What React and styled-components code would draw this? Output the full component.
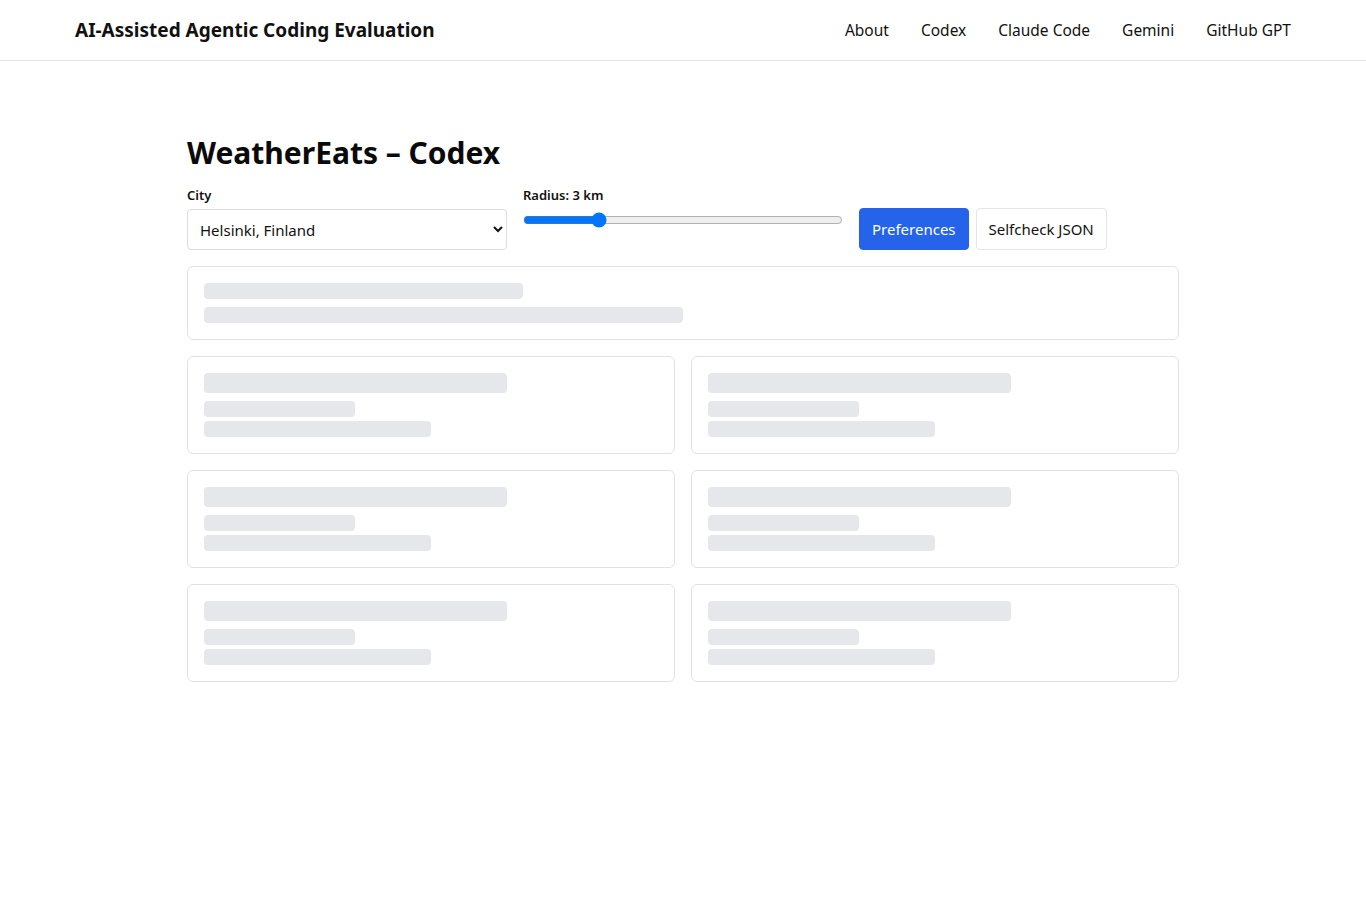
import React, { useState } from "react";
import styled, { createGlobalStyle } from "styled-components";

const GlobalStyle = createGlobalStyle`
  * { box-sizing: border-box; }
  body {
    margin: 0;
    background: #fff;
    color: #111;
    font-family: "Segoe UI", "Noto Sans", "Open Sans", sans-serif;
  }
`;

const Header = styled.header`
  height: 61px;
  border-bottom: 1px solid #e5e5e5;
  display: flex;
  align-items: center;
  justify-content: space-between;
  padding: 0 75px;
`;

const Brand = styled.div`
  font-size: 19px;
  font-weight: 700;
  color: #111;
`;

const Nav = styled.nav`
  display: flex;
  gap: 32px;
`;

const NavLink = styled.a`
  font-size: 15.5px;
  color: #111;
  text-decoration: none;
`;

const Main = styled.main`
  max-width: 992px;
  margin: 0 auto;
  padding: 74px 0 40px;
`;

const Title = styled.h1`
  font-size: 30px;
  font-weight: 700;
  margin: 0 0 15px;
  line-height: 1.2;
  color: #0a0a0a;
`;

const Controls = styled.div`
  display: flex;
  align-items: flex-end;
  gap: 16px;
  margin-bottom: 16px;
`;

const Field = styled.label`
  display: flex;
  flex-direction: column;
  gap: ${(p) => (p.top ? 8 : 5)}px;
  width: 320px;
  align-self: ${(p) => (p.top ? "flex-start" : "auto")};
`;

const FieldLabel = styled.span`
  font-size: 13px;
  font-weight: 600;
`;

const Select = styled.select`
  height: 41px;
  font-size: 15px;
  font-family: inherit;
  padding: 0 8px;
  border: 1px solid #ddd;
  border-radius: 4px;
  background: #fff;
  color: #111;
`;

const Range = styled.input`
  width: 320px;
  margin: 0;
`;

const Buttons = styled.div`
  display: flex;
  gap: 7px;
`;

const Button = styled.button`
  height: 42px;
  padding: 0 12px;
  font-size: 15px;
  font-family: inherit;
  border-radius: 4px;
  cursor: pointer;
  border: 1px solid ${(p) => (p.primary ? "#2563eb" : "#e5e5e5")};
  background: ${(p) => (p.primary ? "#2563eb" : "#fff")};
  color: ${(p) => (p.primary ? "#fff" : "#111")};
`;

const Card = styled.div`
  border: 1px solid #e2e2e2;
  border-radius: 6px;
  padding: 16px;
  display: flex;
  flex-direction: column;
`;

const Grid = styled.div`
  display: grid;
  grid-template-columns: 1fr 1fr;
  gap: 16px;
  margin-top: 16px;
`;

const Bar = styled.div`
  background: #e5e7eb;
  border-radius: 4px;
  height: ${(p) => p.h || 16}px;
  width: ${(p) => p.w};
  margin-top: ${(p) => p.mt || 0}px;
`;

export default function App() {
  const [radius, setRadius] = useState(3);
  return (
    <>
      <GlobalStyle />
      <Header>
        <Brand>AI-Assisted Agentic Coding Evaluation</Brand>
        <Nav>
          <NavLink href="#">About</NavLink>
          <NavLink href="#">Codex</NavLink>
          <NavLink href="#">Claude Code</NavLink>
          <NavLink href="#">Gemini</NavLink>
          <NavLink href="#">GitHub GPT</NavLink>
        </Nav>
      </Header>
      <Main>
        <Title>WeatherEats – Codex</Title>
        <Controls>
          <Field>
            <FieldLabel>City</FieldLabel>
            <Select defaultValue="helsinki">
              <option value="helsinki">Helsinki, Finland</option>
            </Select>
          </Field>
          <Field top>
            <FieldLabel>Radius: {radius} km</FieldLabel>
            <Range
              type="range"
              min="1"
              max="10"
              value={radius}
              onChange={(e) => setRadius(e.target.value)}
            />
          </Field>
          <Buttons>
            <Button primary>Preferences</Button>
            <Button>Selfcheck JSON</Button>
          </Buttons>
        </Controls>
        <Card>
          <Bar w="33.3%" />
          <Bar w="50%" mt={8} />
        </Card>
        <Grid>
          {[0, 1, 2, 3, 4, 5].map((i) => (
            <Card key={i}>
              <Bar w="66.7%" h={20} />
              <Bar w="33.3%" mt={8} />
              <Bar w="50%" mt={4} />
            </Card>
          ))}
        </Grid>
      </Main>
    </>
  );
}
